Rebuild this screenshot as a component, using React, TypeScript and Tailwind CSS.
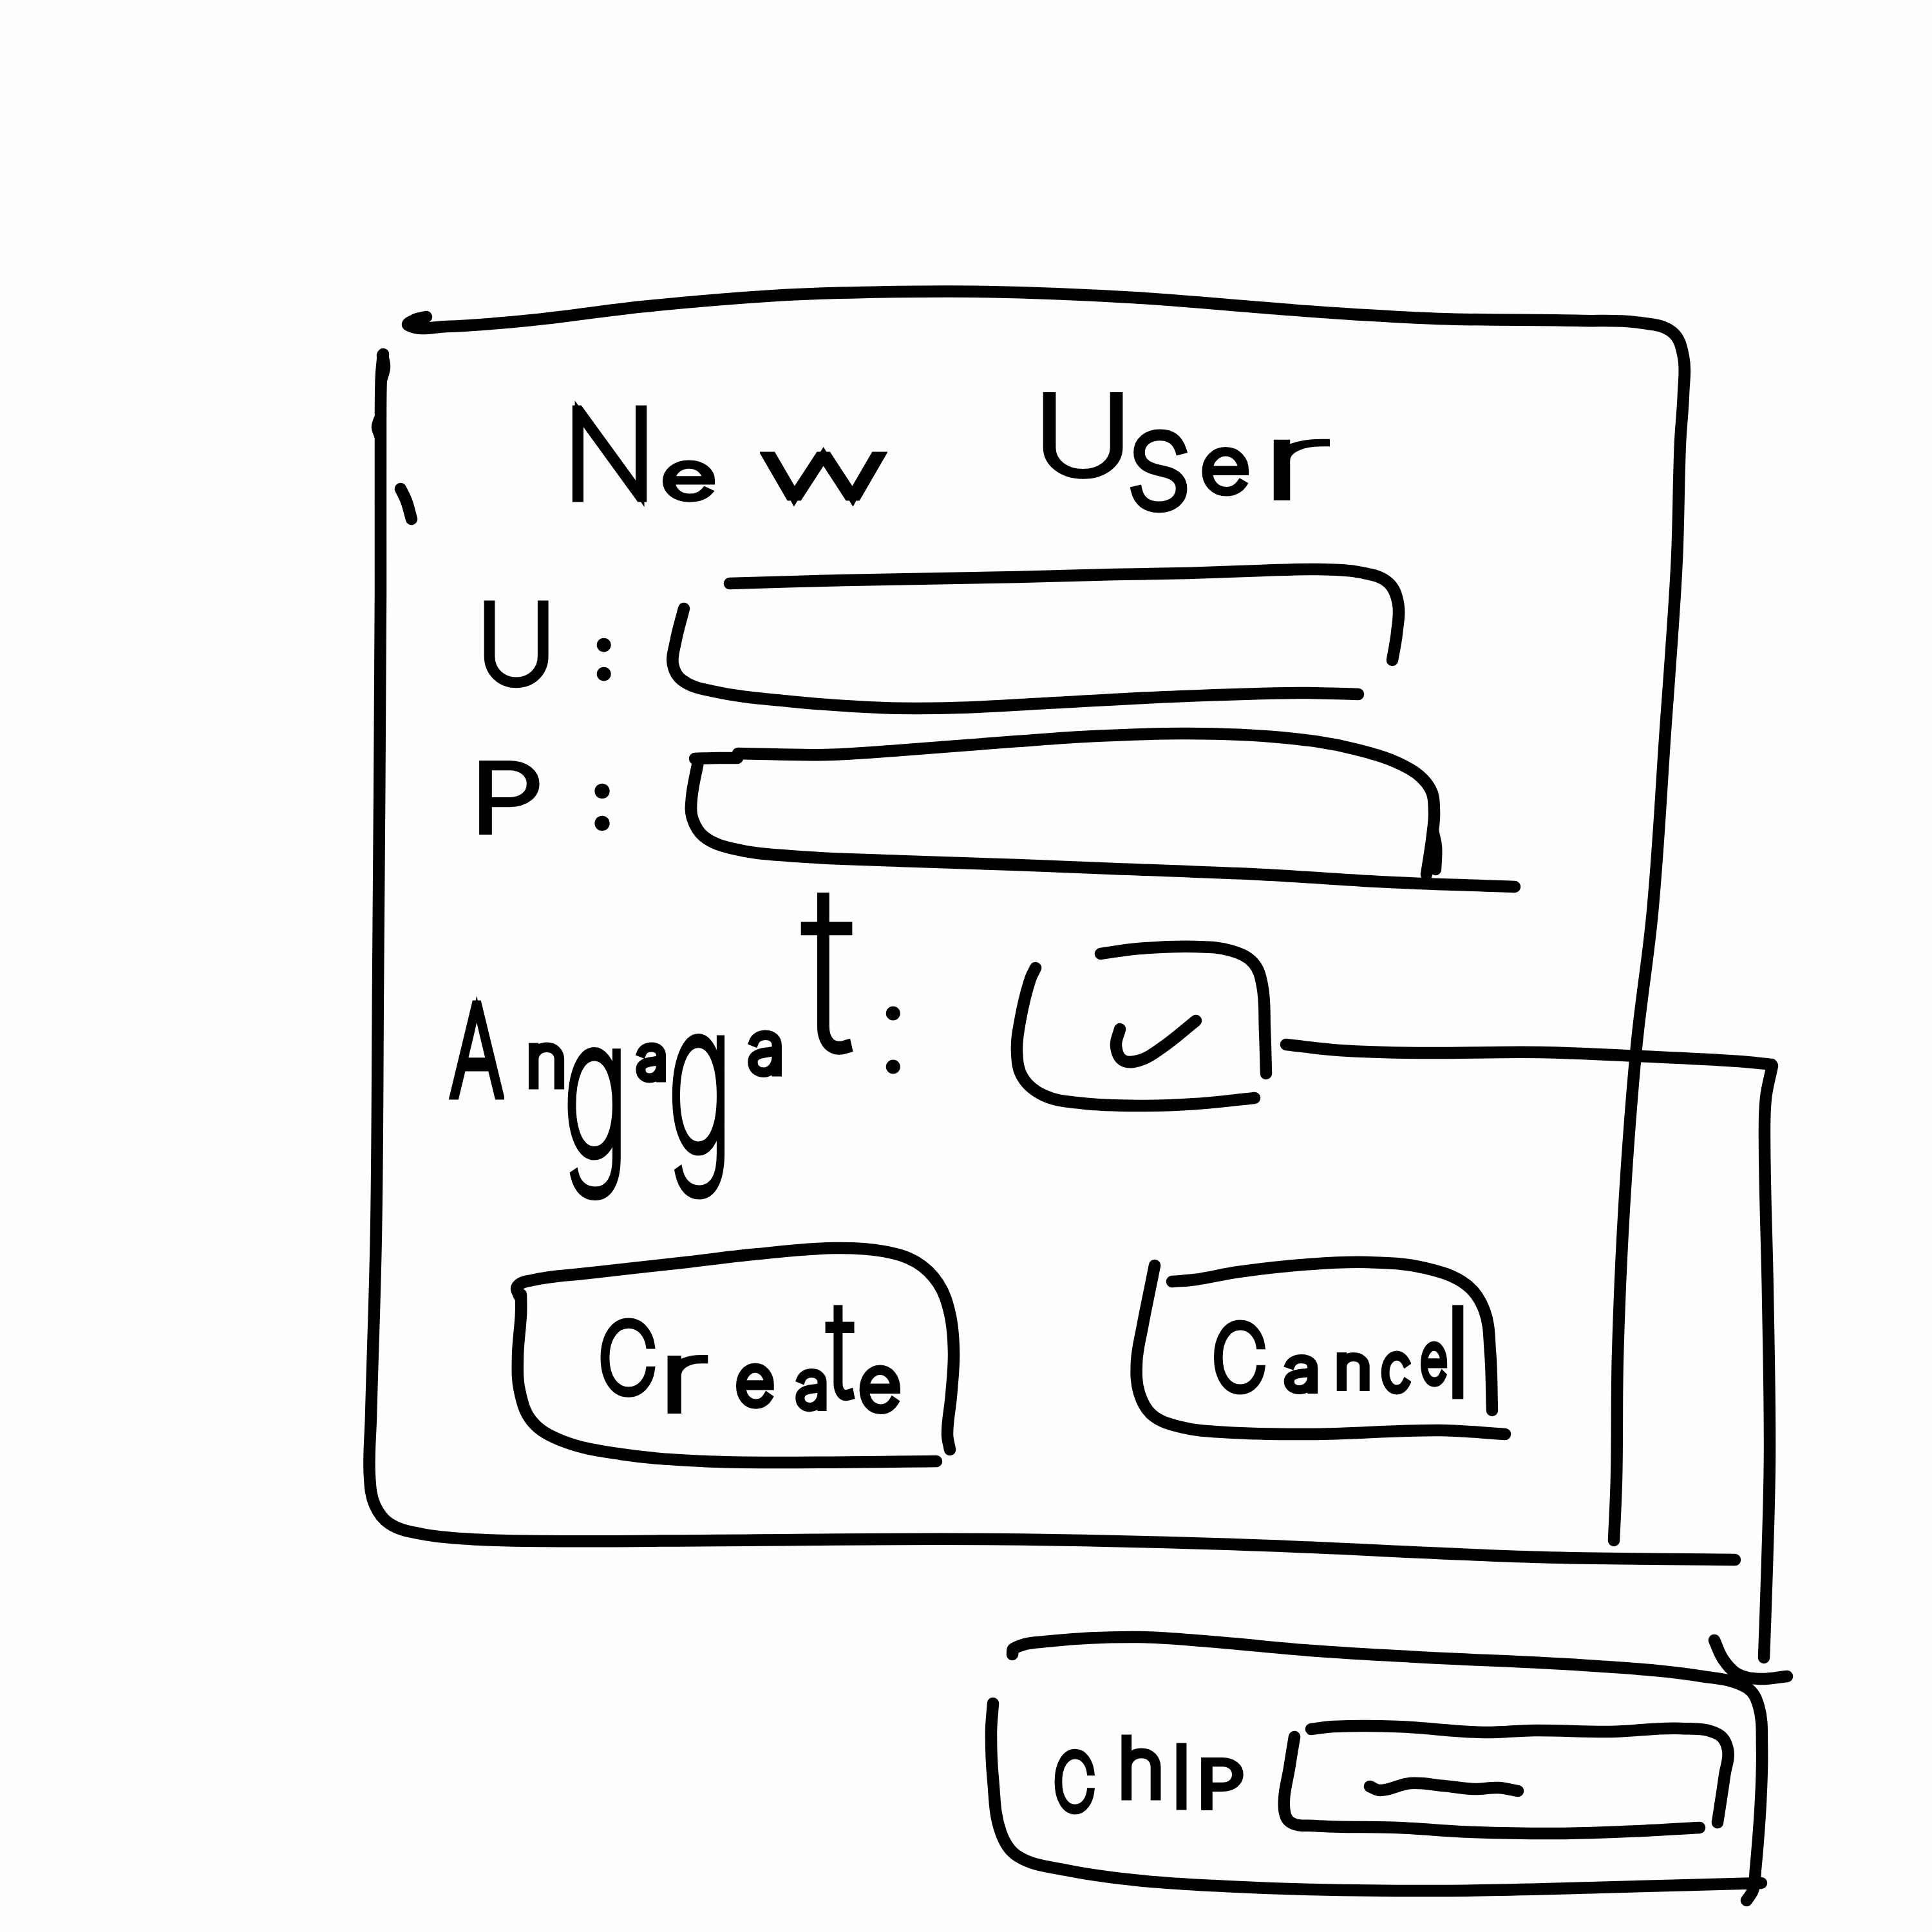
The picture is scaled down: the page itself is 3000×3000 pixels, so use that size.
import React from "react";

type Point = [number, number];
type Frame = [number, number, number, number];

/* Joins hand-placed points with a smooth curve; the tangent at each point
   bisects the directions of its two neighbouring segments. */
function smooth(points: Point[]): string {
  const n = points.length;
  const seg = points.slice(1).map((p, i) => {
    const dx = p[0] - points[i][0];
    const dy = p[1] - points[i][1];
    const len = Math.hypot(dx, dy) || 1;
    return { x: dx / len, y: dy / len, len };
  });
  const tangents = points.map((_, i): Point => {
    const a = seg[Math.max(0, i - 1)];
    const b = seg[Math.min(n - 2, i)];
    const x = a.x * Math.sqrt(a.len) + b.x * Math.sqrt(b.len);
    const y = a.y * Math.sqrt(a.len) + b.y * Math.sqrt(b.len);
    const l = Math.hypot(x, y) || 1;
    return [x / l, y / l];
  });
  let d = `M${points[0][0]} ${points[0][1]}`;
  for (let i = 0; i < n - 1; i++) {
    const k = seg[i].len * 0.36;
    const [p, q, s, t] = [points[i], points[i + 1], tangents[i], tangents[i + 1]];
    d += `C${p[0] + s[0] * k} ${p[1] + s[1] * k} ${q[0] - t[0] * k} ${q[1] - t[1] * k} ${q[0]} ${q[1]}`;
  }
  return d;
}

/* Pen strokes drawn over the box they outline. */
function Ink({ frame, strokes, className }: { frame: Frame; strokes: Point[][]; className: string }) {
  return (
    <svg
      aria-hidden="true"
      viewBox={frame.join(" ")}
      className={className}
      fill="none"
      stroke="black"
      strokeWidth={18.5}
      strokeLinecap="round"
      strokeLinejoin="round"
    >
      {strokes.map((s, i) => (
        <path key={i} d={smooth(s)} />
      ))}
    </svg>
  );
}

const OUTLINE = "pointer-events-none absolute inset-0 size-full overflow-visible";
const WORD = "block whitespace-nowrap text-left font-['Inter',sans-serif] text-[10px] leading-[0] font-[100] text-black [-webkit-text-stroke:13px_black]";

const dialog: Point[][] = [
  [[662, 492], [643, 497], [634, 505], [693, 507], [826, 497], [999, 476], [1203, 459], [1340, 454], [1530, 453], [1759, 462], [1989, 480], [2100, 488], [2234, 495], [2457, 498], [2546, 501], [2597, 516], [2614, 554], [2614, 612], [2609, 688], [2604, 866], [2595, 1010], [2587, 1120], [2566, 1416], [2541, 1626], [2522, 1875], [2512, 2105], [2510, 2296], [2506, 2392]],
  [[595, 550], [592, 583], [591, 653], [591, 920], [587, 1531], [584, 1913], [576, 2200], [574, 2293], [582, 2337], [605, 2366], [655, 2382], [731, 2390], [846, 2393], [1114, 2392], [1530, 2390], [1913, 2398], [2392, 2418], [2694, 2422]],
  [[594, 552], [597, 570], [592, 590]],
  [[589, 652], [586, 663], [590, 676]],
  [[622, 759], [631, 778], [639, 806]],
];

const userField: Point[][] = [
  [[1133, 906], [1311, 901], [1580, 896], [1730, 892], [1844, 890], [1959, 886], [2045, 884], [2114, 889], [2156, 905], [2171, 937], [2169, 983], [2162, 1025]],
  [[1062, 945], [1049, 997], [1045, 1032], [1059, 1056], [1105, 1073], [1225, 1089], [1369, 1099], [1484, 1099], [1643, 1091], [1816, 1082], [2017, 1076], [2109, 1078]],
];

const passwordField: Point[][] = [
  [[1146, 1170], [1283, 1172], [1398, 1165], [1580, 1151], [1700, 1143], [1844, 1139], [1988, 1145], [2103, 1163], [2189, 1194], [2221, 1225], [2227, 1260], [2224, 1298], [2215, 1358]],
  [[2225, 1290], [2230, 1315], [2229, 1350]],
  [[1079, 1178], [1116, 1177], [1145, 1177]],
  [[1084, 1183], [1074, 1239], [1075, 1270], [1093, 1299], [1139, 1318], [1225, 1329], [1398, 1337], [1580, 1343], [1730, 1349], [1959, 1358], [2160, 1370], [2352, 1377]],
];

const checkbox: Point[][] = [
  [[1709, 1481], [1768, 1473], [1857, 1470], [1911, 1476], [1946, 1495], [1960, 1530], [1964, 1600], [1966, 1667]],
  [[1608, 1503], [1600, 1520], [1585, 1580], [1579, 1633], [1588, 1673], [1621, 1701], [1679, 1713], [1768, 1717], [1857, 1714], [1948, 1705]],
  [[1739, 1598], [1733, 1624], [1743, 1646], [1768, 1647], [1804, 1627], [1857, 1585]],
];

const connector: Point[][] = [
  [[1997, 1622], [2080, 1631], [2200, 1635], [2392, 1634], [2545, 1640], [2700, 1648], [2751, 1653]],
  [[2752, 1655], [2742, 1705], [2740, 1770], [2745, 2009], [2748, 2258], [2744, 2430], [2739, 2574]],
  [[2662, 2547], [2676, 2577], [2699, 2600], [2732, 2607], [2775, 2603]],
];

const createButton: Point[][] = [
  [[806, 2012], [803, 1998], [826, 1988], [913, 1977], [1066, 1960], [1168, 1948], [1296, 1938], [1372, 1943], [1423, 1960], [1457, 1993], [1475, 2040], [1481, 2100], [1477, 2167], [1471, 2227], [1475, 2251]],
  [[809, 2010], [809, 2040], [804, 2107], [807, 2160], [826, 2207], [872, 2237], [964, 2258], [1092, 2269], [1219, 2271], [1454, 2269]],
];

const cancelButton: Point[][] = [
  [[1793, 1965], [1789, 1985], [1774, 2060], [1765, 2115], [1769, 2163], [1789, 2197], [1834, 2216], [1901, 2224], [2035, 2227], [2236, 2221], [2337, 2227]],
  [[1820, 1990], [1856, 1987], [1923, 1975], [2035, 1963], [2124, 1960], [2213, 1969], [2277, 1995], [2305, 2035], [2314, 2100], [2317, 2190]],
];

const chipPanel: Point[][] = [
  [[1572, 2569], [1574, 2560], [1634, 2548], [1768, 2542], [1879, 2549], [2036, 2563], [2200, 2573], [2478, 2587], [2643, 2603], [2713, 2621], [2731, 2650], [2736, 2713], [2734, 2797], [2726, 2903], [2722, 2935], [2712, 2951]],
  [[1542, 2645], [1539, 2690], [1542, 2763], [1554, 2845], [1580, 2882], [1656, 2904], [1768, 2920], [1902, 2929], [2036, 2934], [2242, 2936], [2478, 2931], [2735, 2924]],
];

const chipField: Point[][] = [
  [[2010, 2697], [2003, 2740], [1994, 2807], [2003, 2829], [2040, 2835], [2170, 2838], [2289, 2845], [2430, 2847], [2548, 2843], [2639, 2838]],
  [[2036, 2685], [2071, 2681], [2170, 2681], [2303, 2690], [2383, 2687], [2501, 2689], [2610, 2684], [2668, 2693], [2683, 2717], [2678, 2757], [2667, 2830]],
  [[2127, 2774], [2143, 2780], [2190, 2769], [2242, 2773], [2289, 2778], [2327, 2776], [2357, 2781]],
];

export default function App() {
  return (
    <main className="relative flex h-[3000px] w-[3000px] flex-col overflow-hidden bg-[#fefefe] pt-[452px] pl-[574px]">
      <section className="relative flex h-[1970px] w-[2042px] shrink-0 flex-col">
        <Ink frame={[574, 452, 2042, 1970]} strokes={dialog} className={OUTLINE} />

        <header className="h-[432px] shrink-0 pt-[246px] pl-[300px]">
          <h1 className={WORD}>
            <span className="inline-block w-[154px] text-[188px]">N</span>
            <span className="inline-block w-[152px] origin-left scale-x-150 text-[96px] [-webkit-text-stroke:11px_black]">e</span>
            <span className="inline-block w-[424px] origin-left scale-x-200 text-[122px] [-webkit-text-stroke:9px_black]">w</span>{" "}
            <span className="inline-block w-[142px] origin-left -translate-y-[37px] scale-x-125 text-[166px] [-webkit-text-stroke:12px_black]">U</span>
            <span className="inline-block w-[116px] translate-y-[14px] text-[206px]">s</span>
            <span className="inline-block w-[88px] origin-left -translate-y-[10px] scale-x-115 text-[114px] [-webkit-text-stroke:12px_black]">e</span>
            <span className="inline-block origin-left scale-x-220 text-[158px] [-webkit-text-stroke:8px_black]">r</span>
          </h1>
        </header>

        <div className="flex h-[216px] shrink-0">
          <label className="w-[471px] shrink-0 pt-[116px] pl-[168px]">
            <span className={WORD}>
              <span className="inline-block w-[175px] text-[166px]">U</span>
              <span className="inline-block -translate-y-[4px] text-[124px] font-bold [-webkit-text-stroke:1px_black]">:</span>
            </span>
          </label>
          <div className="relative w-[1127px]">
            <Ink frame={[1045, 884, 1127, 216]} strokes={userField} className={OUTLINE} />
          </div>
        </div>

        <div className="mt-[39px] flex h-[238px] shrink-0">
          <label className="w-[499px] shrink-0 pt-[99px] pl-[157px]">
            <span className={WORD}>
              <span className="inline-block w-[181px] origin-left scale-x-130 text-[142px] [-webkit-text-stroke:12px_black]">P</span>
              <span className="inline-block -translate-y-[1px] text-[138px] font-bold">
                <span className="[-webkit-text-stroke:0px_black]">:</span>
              </span>
            </span>
          </label>
          <div className="relative w-[1277px]">
            <Ink frame={[1073, 1139, 1277, 238]} strokes={passwordField} className={OUTLINE} />
          </div>
        </div>

        <div className="mt-[93px] flex h-[247px] shrink-0">
          <label className="w-[1005px] shrink-0 pt-[104px] pl-[125px]">
            <span className={WORD}>
              <span className="inline-block w-[118px] origin-left scale-x-65 text-[194px] font-[200]">A</span>
              <span className="inline-block w-[58px] -translate-y-[16px] text-[108px]">n</span>
              <span className="inline-block w-[114px] origin-left translate-y-[93px] scale-x-60 text-[290px] [-webkit-text-stroke:15px_black]">g</span>
              <span className="inline-block w-[48px] -translate-y-[27px] text-[90px]">a</span>
              <span className="inline-block w-[125px] origin-left translate-y-[86px] scale-x-55 text-[315px] [-webkit-text-stroke:15px_black]">g</span>
              <span className="inline-block w-[86px] -translate-y-[36px] text-[106px]">a</span>
              <span className="inline-block w-[115px] origin-left -translate-y-[72px] scale-x-90 text-[350px]">t</span>
              <span className="inline-block -translate-y-[41px] text-[176px]">:</span>
            </span>
          </label>
          <div className="relative w-[387px]">
            <Ink frame={[1579, 1470, 387, 247]} strokes={checkbox} className={OUTLINE} />
          </div>
        </div>

        <div className="mt-[222px] flex h-[332px] shrink-0 gap-[285px] pl-[229px]">
          <button className="relative flex h-[332px] w-[678px] shrink-0 items-start pt-[150px] pl-[126px]">
            <Ink frame={[803, 1939, 678, 332]} strokes={createButton} className={OUTLINE} />
            <span className={WORD}>
              <span className="inline-block w-[93px] origin-left scale-x-85 text-[148px]">C</span>
              <span className="inline-block w-[121px] origin-left translate-y-[28px] scale-x-160 text-[146px] [-webkit-text-stroke:10px_black]">r</span>
              <span className="inline-block w-[93px] translate-y-[18px] text-[102px]">e</span>
              <span className="inline-block w-[50px] translate-y-[23px] text-[97px] [-webkit-text-stroke:12px_black]">a</span>
              <span className="inline-block w-[48px] origin-left translate-y-[6px] scale-x-80 text-[200px]">t</span>
              <span className="inline-block translate-y-[26px] text-[112px]">e</span>
            </span>
          </button>
          <button className="relative mt-[23px] flex h-[265px] w-[568px] shrink-0 items-start pt-[130px] pl-[116px]">
            <Ink frame={[1766, 1962, 568, 265]} strokes={cancelButton} className={OUTLINE} />
            <span className={WORD}>
              <span className="inline-block w-[113px] origin-left scale-x-85 text-[138px]">C</span>
              <span className="inline-block w-[78px] origin-left scale-x-115 text-[90px] [-webkit-text-stroke:12px_black]">a</span>
              <span className="inline-block w-[72px] origin-left -translate-y-[4px] scale-x-110 text-[88px] [-webkit-text-stroke:12px_black]">n</span>
              <span className="inline-block w-[61px] origin-left scale-x-85 text-[97px]">c</span>
              <span className="inline-block w-[38px] origin-left -translate-y-[12px] scale-x-70 text-[102px]">e</span>
              <span className="inline-block translate-y-[8px] text-[183px]">l</span>
            </span>
          </button>
        </div>
      </section>

      <section className="relative mt-[120px] ml-[964px] flex h-[411px] w-[1198px] shrink-0">
        <Ink frame={[1538, 2542, 1198, 411]} strokes={chipPanel} className={OUTLINE} />
        <label className="w-[456px] shrink-0 pt-[223px] pl-[98px]">
          <span className={WORD}>
            <span className="inline-block w-[100px] origin-left scale-x-75 text-[119px]">C</span>
            <span className="inline-block w-[83px] -translate-y-[21px] text-[123px]">h</span>
            <span className="inline-block w-[40px] -translate-y-[6px] text-[125px]">I</span>
            <span className="inline-block origin-left -translate-y-[5px] scale-x-125 text-[96px] [-webkit-text-stroke:12px_black]">P</span>
          </span>
        </label>
        <div className="relative mt-[139px] h-[166px] w-[689px]">
          <Ink frame={[1994, 2681, 689, 166]} strokes={chipField} className={OUTLINE} />
        </div>
      </section>

      {/* Arrow from the checkbox down to the chip panel */}
      <Ink
        frame={[1997, 1622, 778, 985]}
        strokes={connector}
        className="pointer-events-none absolute top-[1622px] left-[1997px] h-[985px] w-[778px] overflow-visible"
      />
    </main>
  );
}
